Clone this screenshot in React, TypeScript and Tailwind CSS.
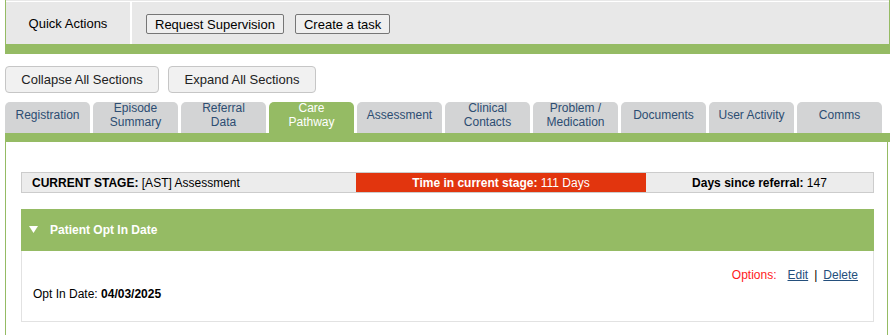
const font = { fontFamily: '"Liberation Sans", Arial, sans-serif' }

const tabs = [
  ['Registration'],
  ['Episode', 'Summary'],
  ['Referral', 'Data'],
  ['Care', 'Pathway'],
  ['Assessment'],
  ['Clinical', 'Contacts'],
  ['Problem /', 'Medication'],
  ['Documents'],
  ['User Activity'],
  ['Comms'],
]

function App() {
  return (
    <div className="w-[895px] h-[335px] bg-white text-black overflow-hidden" style={font}>
      {/* quick actions */}
      <div className="ml-[5px] w-[885px] border-l border-r border-[#95bb64] bg-[#e8e8e8]">
        <div className="h-px bg-[#e8e8e8]" />
        <div className="h-px bg-white" />
        <div className="flex h-[42px] items-center">
          <div className="flex h-full w-[126px] items-center justify-center border-r-2 border-white pt-px text-[13px]">
            Quick Actions
          </div>
          <div className="flex items-center gap-[11px] pt-[2px] pl-[14px]">
            <button className="h-[20px] rounded-[2px] border border-[#767676] bg-[#efefef] px-[8px] text-[13px] leading-none">
              Request Supervision
            </button>
            <button className="h-[20px] rounded-[2px] border border-[#767676] bg-[#efefef] px-[8px] text-[13px] leading-none">
              Create a task
            </button>
          </div>
        </div>
      </div>
      <div className="ml-[5px] h-[10px] w-[885px] bg-[#95bb64]" />

      {/* section buttons */}
      <div className="mt-[12px] ml-[5px] flex gap-[9px]">
        <button className="h-[27px] w-[154px] rounded-[4px] border border-[#c6c6c6] bg-[#f1f1f1] text-[13px] text-[#222]">
          Collapse All Sections
        </button>
        <button className="h-[27px] w-[148px] rounded-[4px] border border-[#c6c6c6] bg-[#f1f1f1] text-[13px] text-[#222]">
          Expand All Sections
        </button>
      </div>

      {/* tabs */}
      <div className="mt-[9px] ml-[5px] flex gap-[3px]">
        {tabs.map((t) => {
          const active = t[0] === 'Care'
          return (
            <div
              key={t.join()}
              className={
                active
                  ? 'flex h-[31px] w-[85px] flex-col items-center justify-center rounded-t-[5px] bg-[#95bb64] pb-[5px] text-[12px] leading-[14px] text-white'
                  : 'flex h-[31px] w-[85px] flex-col items-center justify-center rounded-t-[5px] bg-[#d3d4d5] pb-[5px] text-[12px] leading-[14px] text-[#2c4d72]'
              }
            >
              {t.map((l) => (
                <span key={l}>{l}</span>
              ))}
            </div>
          )
        })}
      </div>
      <div className="ml-[5px] h-[9px] w-[885px] bg-[#95bb64]" />

      {/* care pathway content */}
      <div className="ml-[5px] h-[200px] w-[883px] border-l border-r border-[#95bb64] pt-[30px] pl-[15px]">
        <div className="flex h-[21px] w-[853px] border border-[#cccccc] bg-[#ececec] text-[12px]">
          <div className="flex w-[334px] items-center pl-[10px]">
            <b>CURRENT STAGE:</b>&nbsp;[AST] Assessment
          </div>
          <div className="flex w-[290px] items-center justify-center bg-[#e2350e] text-white">
            <b>Time in current stage:</b>&nbsp;111 Days
          </div>
          <div className="flex flex-1 items-center justify-center">
            <b>Days since referral:</b>&nbsp;147
          </div>
        </div>

        <div className="mt-[16px] w-[853px]">
          <div className="flex h-[42px] items-center bg-[#95bb64] pb-px pl-[8px] text-[12px] font-bold text-white">
            <svg width="9" height="7" viewBox="0 0 9 7" className="mr-[12px]">
              <path d="M0 0 L9 0 L4.5 7 Z" fill="white" />
            </svg>
            Patient Opt In Date
          </div>
          <div className="h-[71px] border border-t-0 border-[#e2e2e2] pl-[11px] text-[12px]">
            <div className="flex justify-end gap-[6px] pt-[17px] pr-[15px] leading-[14px]">
              <span className="text-[#ff1a1a]">Options:</span>
              <a href="#" className="ml-[5px] text-[#244f7c] underline">
                Edit
              </a>
              <span>|</span>
              <a href="#" className="text-[#244f7c] underline">
                Delete
              </a>
            </div>
            <div className="mt-[5px] leading-[14px]">
              Opt In Date: <b>04/03/2025</b>
            </div>
          </div>
        </div>
      </div>
    </div>
  )
}

export default App
